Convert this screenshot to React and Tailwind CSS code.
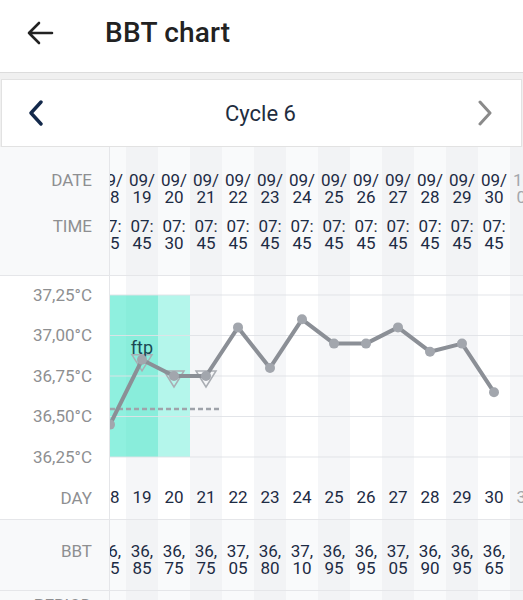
import React from "react";

const days = [
  { d: 18, date: ["09/", "18"], time: ["07:", "45"], bbt: ["36,", "45"], t: 36.45 },
  { d: 19, date: ["09/", "19"], time: ["07:", "45"], bbt: ["36,", "85"], t: 36.85 },
  { d: 20, date: ["09/", "20"], time: ["07:", "30"], bbt: ["36,", "75"], t: 36.75 },
  { d: 21, date: ["09/", "21"], time: ["07:", "45"], bbt: ["36,", "75"], t: 36.75 },
  { d: 22, date: ["09/", "22"], time: ["07:", "45"], bbt: ["37,", "05"], t: 37.05 },
  { d: 23, date: ["09/", "23"], time: ["07:", "45"], bbt: ["36,", "80"], t: 36.8 },
  { d: 24, date: ["09/", "24"], time: ["07:", "45"], bbt: ["37,", "10"], t: 37.1 },
  { d: 25, date: ["09/", "25"], time: ["07:", "45"], bbt: ["36,", "95"], t: 36.95 },
  { d: 26, date: ["09/", "26"], time: ["07:", "45"], bbt: ["36,", "95"], t: 36.95 },
  { d: 27, date: ["09/", "27"], time: ["07:", "45"], bbt: ["37,", "05"], t: 37.05 },
  { d: 28, date: ["09/", "28"], time: ["07:", "45"], bbt: ["36,", "90"], t: 36.9 },
  { d: 29, date: ["09/", "29"], time: ["07:", "45"], bbt: ["36,", "95"], t: 36.95 },
  { d: 30, date: ["09/", "30"], time: ["07:", "45"], bbt: ["36,", "65"], t: 36.65 },
  { d: 31, date: ["10/", "01"], time: null, bbt: null, t: null, future: true },
];

const yLabels = ["37,25°C", "37,00°C", "36,75°C", "36,50°C", "36,25°C"];

const px = (d) => (d - 18) * 32;
const py = (t) => 59.5 + ((37.0 - t) / 0.25) * 40.5;

function Pair({ lines, future }) {
  if (!lines) return <div className="h-[34px]" />;
  return (
    <div
      className={
        "flex flex-col items-center leading-[17px] text-[17px] " +
        (future ? "text-[#a3a6ab]" : "text-[#1d2b44]")
      }
    >
      <span className="whitespace-nowrap">{lines[0]}</span>
      <span className="whitespace-nowrap">{lines[1]}</span>
    </div>
  );
}

function Chart() {
  const pts = days.filter((x) => x.t !== null);
  const line = pts.map((p) => `${px(p.d)},${py(p.t)}`).join(" ");
  return (
    <svg className="absolute top-0 left-0 pointer-events-none" width="413" height="200">
      {/* fertile window */}
      <rect x="0" y="19" width="48" height="162" fill="#8ff0df" />
      <rect x="16" y="19" width="32" height="162" fill="#89eddb" />
      <rect x="48" y="19" width="32" height="162" fill="#b4f6eb" />
      {[19, 59.5, 100, 140.5, 181].map((y) => (
        <line key={y} x1="0" x2="413" y1={y} y2={y} stroke="#e1e3e7" strokeWidth="1" opacity="0.9" />
      ))}
      <line x1="0" x2="111" y1="133" y2="133" stroke="#9fa3aa" strokeWidth="2.5" strokeDasharray="5 3" />
      {[19, 20, 21].map((d) => {
        const x = px(d);
        const y = py(days.find((k) => k.d === d).t);
        return (
          <polygon
            key={d}
            points={`${x - 10},${y - 5} ${x + 10},${y - 5} ${x},${y + 11}`}
            fill="none"
            stroke="#a9adb3"
            strokeWidth="1.5"
          />
        );
      })}
      <text
        x="32"
        y="78"
        textAnchor="middle"
        fontSize="18"
        fill="#1b4854"
        style={{ fontFamily: "Roboto, sans-serif" }}
      >
        ftp
      </text>
      <polyline points={line} fill="none" stroke="#8b8f96" strokeWidth="4" strokeLinejoin="round" />
      {pts.map((p) => (
        <circle key={p.d} cx={px(p.d)} cy={py(p.t)} r="5" fill="#a2a6ad" />
      ))}
    </svg>
  );
}

export default function App() {
  return (
    <div className="w-[523px] h-[600px] overflow-hidden bg-white font-['Roboto',sans-serif]">
      {/* top bar */}
      <div className="h-[73px] flex items-center pb-[6px] border-b border-[#dcdcdc]">
        <svg width="30" height="26" viewBox="0 0 30 26" className="ml-[25px]">
          <path d="M4 13 H27 M14 3 L4 13 L14 23" fill="none" stroke="#222" strokeWidth="2.6" strokeLinecap="round" strokeLinejoin="round" />
        </svg>
        <h1 className="ml-[50px] text-[28px] font-medium text-[#222] tracking-[0.2px]">BBT chart</h1>
      </div>

      {/* cycle switcher */}
      <div className="bg-[#f0f0f0] pt-[6px] px-px">
        <div className="h-[68px] bg-white border border-[#e2e2e2] flex items-center justify-between px-[25px]">
          <svg width="18" height="26" viewBox="0 0 18 26">
            <path d="M14 2 L4 13 L14 24" fill="none" stroke="#13294b" strokeWidth="3.4" strokeLinecap="round" strokeLinejoin="round" />
          </svg>
          <span className="text-[22px] text-[#1f2d40]">Cycle 6</span>
          <svg width="18" height="26" viewBox="0 0 18 26" className="mr-[2px]">
            <path d="M4 2 L14 13 L4 24" fill="none" stroke="#8a8a8a" strokeWidth="3" strokeLinecap="round" strokeLinejoin="round" />
          </svg>
        </div>
      </div>

      {/* date / time */}
      <div className="flex h-[129px] border-b border-[#e5e6e9] bg-[#f8f9fa]">
        <div className="w-[110px] shrink-0 border-r border-[#e5e6e9] pt-[25px] pr-[17px] flex flex-col items-end gap-[29px] text-[17px] text-[#8e8f91] leading-[17px]">
          <span>DATE</span>
          <span>TIME</span>
        </div>
        <div className="flex-1 overflow-hidden">
          <div className="flex -ml-[16px] h-full">
            {days.map((c) => (
              <div
                key={c.d}
                className={"w-[32px] shrink-0 h-full pt-[25px] flex flex-col gap-[12px] " + (c.d % 2 ? "bg-[#f2f3f5]" : "bg-[#f9fafb]")}
              >
                <Pair lines={c.date} future={c.future} />
                <Pair lines={c.time} />
              </div>
            ))}
          </div>
        </div>
      </div>

      {/* chart + day */}
      <div className="flex h-[244px] border-b border-[#e5e6e9]">
        <div className="w-[110px] shrink-0 border-r border-[#e5e6e9] pr-[17px] flex flex-col items-end text-[17px] text-[#8e8f91]">
          <div className="-mt-px">
            {yLabels.map((l) => (
              <div key={l} className="h-[40.5px] flex items-center justify-end">
                {l}
              </div>
            ))}
          </div>
          <div className="mt-auto h-[43px] flex items-center">DAY</div>
        </div>
        <div className="flex-1 overflow-hidden relative">
          <div className="flex -ml-[16px] h-full">
            {days.map((c) => (
              <div
                key={c.d}
                className={"w-[32px] shrink-0 h-full flex flex-col justify-end " + (c.d % 2 ? "bg-[#f5f6f8]" : "bg-white")}
              >
                <div
                  className={
                    "h-[43px] flex items-center justify-center text-[17px] " +
                    (c.future ? "text-[#a3a6ab]" : "text-[#1d2b44]")
                  }
                >
                  {c.d}
                </div>
              </div>
            ))}
          </div>
          <Chart />
        </div>
      </div>

      {/* BBT */}
      <div className="flex h-[71px] border-b border-[#e5e6e9] bg-[#f8f9fa]">
        <div className="w-[110px] shrink-0 border-r border-[#e5e6e9] pt-[23px] pr-[17px] flex flex-col items-end text-[17px] text-[#8e8f91] leading-[17px]">
          <span>BBT</span>
        </div>
        <div className="flex-1 overflow-hidden">
          <div className="flex -ml-[16px] h-full">
            {days.map((c) => (
              <div
                key={c.d}
                className={"w-[32px] shrink-0 h-full pt-[23px] " + (c.d % 2 ? "bg-[#f2f3f5]" : "bg-[#f9fafb]")}
              >
                <Pair lines={c.bbt} />
              </div>
            ))}
          </div>
        </div>
      </div>

      {/* period */}
      <div className="flex h-[60px] bg-[#f8f9fa]">
        <div className="w-[110px] shrink-0 border-r border-[#e5e6e9] pt-[6px] pr-[17px] flex flex-col items-end text-[17px] text-[#8e8f91] leading-[17px]">
          <span>PERIOD</span>
        </div>
        <div className="flex-1 overflow-hidden">
          <div className="flex -ml-[16px] h-full">
            {days.map((c) => (
              <div key={c.d} className={"w-[32px] shrink-0 h-full " + (c.d % 2 ? "bg-[#f2f3f5]" : "bg-[#f9fafb]")} />
            ))}
          </div>
        </div>
      </div>
    </div>
  );
}
